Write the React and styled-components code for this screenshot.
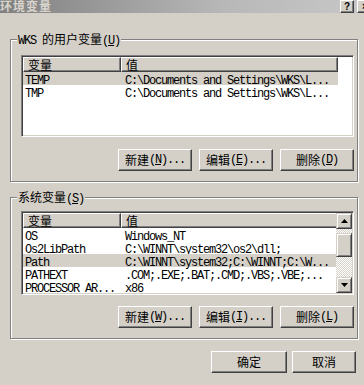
import React from 'react';
import styled, { createGlobalStyle } from 'styled-components';

const GlobalStyle = createGlobalStyle`
  html, body {
    margin: 0;
    padding: 0;
    background: #d4d0c8;
  }
  body {
    font-family: "Noto Sans CJK SC", "Liberation Mono", sans-serif;
    font-size: 12px;
    color: #000;
  }
`;

const Dialog = styled.div`
  width: 364px;
  height: 385px;
  overflow: hidden;
  background: #d4d0c8;
  display: flex;
  flex-direction: column;
`;

const TitleBar = styled.div`
  flex: none;
  width: 375px;
  height: 14px;
  padding-right: 2px;
  box-sizing: border-box;
  display: flex;
  align-items: flex-start;
  gap: 3px;
  background: linear-gradient(to right, #808080, #b8b8b8 60%, #c8c8c8);
  border-bottom: 1px solid #d4d0c8;
`;

const Title = styled.div`
  flex: 1;
  height: 14px;
  font-weight: bold;
  font-size: 12px;
  line-height: 12px;
  letter-spacing: 1px;
  color: #d8d4cc;
`;

const CaptionButton = styled.div`
  width: ${p => p.$w}px;
  height: 13px;
  box-sizing: border-box;
  background: #d4d0c8;
  border: 1px solid;
  border-color: #fff #404040 #404040 #fff;
  box-shadow: inset -1px -1px 0 #808080;
  display: flex;
  align-items: center;
  justify-content: center;
  font-family: "Liberation Sans", sans-serif;
  font-weight: bold;
  font-size: 10px;
  line-height: 10px;
`;

const Group = styled.div`
  position: relative;
  margin: ${p => p.$top}px 0 0 10px;
  width: 348px;
  box-sizing: border-box;
  border: 1px solid #808080;
  box-shadow: inset 1px 1px 0 #fff, 1px 1px 0 #fff;
  padding: ${p => p.$pad}px 3px 10px 10px;
  display: flex;
  flex-direction: column;
`;

const Legend = styled.div`
  position: absolute;
  top: -8px;
  left: 6px;
  height: 14px;
  padding: 0 1px;
  line-height: 14px;
  background: #d4d0c8;
  white-space: nowrap;
`;

const Mono = styled.span`
  font-family: "Liberation Mono", monospace;
  letter-spacing: -1.2px;
  white-space: pre;
`;

const List = styled.div`
  width: 333px;
  height: ${p => p.$h}px;
  box-sizing: border-box;
  padding: 1px;
  border: 1px solid;
  border-color: #808080 #fff #fff #808080;
  box-shadow: inset 1px 1px 0 #404040, inset -1px -1px 0 #d4d0c8;
  background: #fff;
  display: flex;
  overflow: hidden;
`;

const Table = styled.div`
  flex: 1;
  min-width: 0;
  overflow: hidden;
  display: flex;
  flex-direction: column;
`;

const HeaderRow = styled.div`
  display: flex;
  flex: none;
  height: 15px;
`;

const HeaderCell = styled.div`
  flex: none;
  width: ${p => p.$w}px;
  box-sizing: border-box;
  padding-left: 4px;
  background: #d4d0c8;
  border: 1px solid;
  border-color: #fff #404040 #404040 #fff;
  box-shadow: inset -1px -1px 0 #808080;
  line-height: 13px;
  white-space: nowrap;
`;

const Row = styled.div`
  display: flex;
  flex: none;
  height: 13px;
  width: 315px;
  background: ${p => (p.$selected ? '#d4d0c8' : 'transparent')};
`;

const Cell = styled.div`
  flex: none;
  width: ${p => p.$w}px;
  box-sizing: border-box;
  padding-left: ${p => p.$pad}px;
  line-height: 13px;
  white-space: nowrap;
`;

const Scrollbar = styled.div`
  flex: none;
  width: 16px;
  display: flex;
  flex-direction: column;
`;

const Raised = styled.div`
  flex: none;
  height: ${p => p.$h}px;
  box-sizing: border-box;
  background: #d4d0c8;
  border: 1px solid;
  border-color: #d4d0c8 #404040 #404040 #d4d0c8;
  box-shadow: inset 1px 1px 0 #fff, inset -1px -1px 0 #808080;
  display: flex;
  align-items: center;
  justify-content: center;
`;

const Track = styled.div`
  flex: 1;
  display: flex;
  flex-direction: column;
  padding-top: 4px;
  background: repeating-conic-gradient(#fff 0 25%, #d4d0c8 0 50%) 0 0 / 2px 2px;
`;

const ButtonRow = styled.div`
  display: flex;
  justify-content: flex-end;
  gap: ${p => p.$gap}px;
  margin-top: ${p => p.$top}px;
  padding-right: ${p => p.$right || 0}px;
`;

const Button = styled.button`
  flex: none;
  width: ${p => p.$w || 74}px;
  height: 22px;
  box-sizing: border-box;
  margin: 0;
  padding: 0;
  background: #d4d0c8;
  color: #000;
  font: inherit;
  line-height: 14px;
  border: 1px solid;
  border-color: #fff #404040 #404040 #fff;
  box-shadow: inset -1px -1px 0 #808080;
  display: flex;
  align-items: center;
  justify-content: center;
  white-space: nowrap;
`;

// splits text into CJK / ASCII runs, "&X" underlines X
const Txt = ({ text }) => {
  const parts = [];
  let i = 0;
  let key = 0;
  while (i < text.length) {
    if (text[i] === '&') {
      parts.push(<Mono key={key++}><u>{text[i + 1]}</u></Mono>);
      i += 2;
      continue;
    }
    const ascii = text.charCodeAt(i) < 128;
    let j = i;
    while (j < text.length && text[j] !== '&' && (text.charCodeAt(j) < 128) === ascii) j++;
    const run = text.slice(i, j);
    parts.push(ascii ? <Mono key={key++}>{run}</Mono> : <span key={key++}>{run}</span>);
    i = j;
  }
  return <>{parts}</>;
};

const Arrow = ({ down }) => (
  <svg width="7" height="4" viewBox="0 0 7 4">
    <path d={down ? 'M0 0H7L3.5 4Z' : 'M3.5 0L7 4H0Z'} fill="#000" />
  </svg>
);

const userVars = [
  { name: 'TEMP', value: 'C:\\Documents and Settings\\WKS\\L...', selected: true },
  { name: 'TMP', value: 'C:\\Documents and Settings\\WKS\\L...' },
];

const systemVars = [
  { name: 'OS', value: 'Windows_NT' },
  { name: 'Os2LibPath', value: 'C:\\WINNT\\system32\\os2\\dll;' },
  { name: 'Path', value: 'C:\\WINNT\\system32;C:\\WINNT;C:\\W...', selected: true },
  { name: 'PATHEXT', value: '.COM;.EXE;.BAT;.CMD;.VBS;.VBE;...' },
  { name: 'PROCESSOR_AR...', value: 'x86' },
];

const VarTable = ({ rows }) => (
  <Table>
    <HeaderRow>
      <HeaderCell $w={98}>变量</HeaderCell>
      <HeaderCell $w={217}>值</HeaderCell>
    </HeaderRow>
    {rows.map(r => (
      <Row key={r.name} $selected={r.selected}>
        <Cell $w={98} $pad={2}><Mono>{r.name}</Mono></Cell>
        <Cell $w={217} $pad={4}><Mono>{r.value}</Mono></Cell>
      </Row>
    ))}
  </Table>
);

export default function App() {
  return (
    <Dialog>
      <GlobalStyle />
      <TitleBar>
        <Title>环境变量</Title>
        <CaptionButton $w={14}>?</CaptionButton>
        <CaptionButton $w={16}>×</CaptionButton>
      </TitleBar>

      <Group $top={25} $pad={15}>
        <Legend><Txt text="WKS 的用户变量(&U)" /></Legend>
        <List $h={82}>
          <VarTable rows={userVars} />
        </List>
        <ButtonRow $gap={7} $top={12}>
          <Button><Txt text="新建(&N)..." /></Button>
          <Button><Txt text="编辑(&E)..." /></Button>
          <Button><Txt text="删除(&D)" /></Button>
        </ButtonRow>
      </Group>

      <Group $top={15} $pad={13}>
        <Legend><Txt text="系统变量(&S)" /></Legend>
        <List $h={84}>
          <VarTable rows={systemVars} />
          <Scrollbar>
            <Raised $h={16}><Arrow /></Raised>
            <Track>
              <Raised $h={24} />
            </Track>
            <Raised $h={16}><Arrow down /></Raised>
          </Scrollbar>
        </List>
        <ButtonRow $gap={7} $top={11}>
          <Button><Txt text="新建(&W)..." /></Button>
          <Button><Txt text="编辑(&I)..." /></Button>
          <Button><Txt text="删除(&L)" /></Button>
        </ButtonRow>
      </Group>

      <ButtonRow $gap={5} $top={12} $right={8}>
        <Button $w={76}>确定</Button>
        <Button $w={64}>取消</Button>
      </ButtonRow>
    </Dialog>
  );
}
